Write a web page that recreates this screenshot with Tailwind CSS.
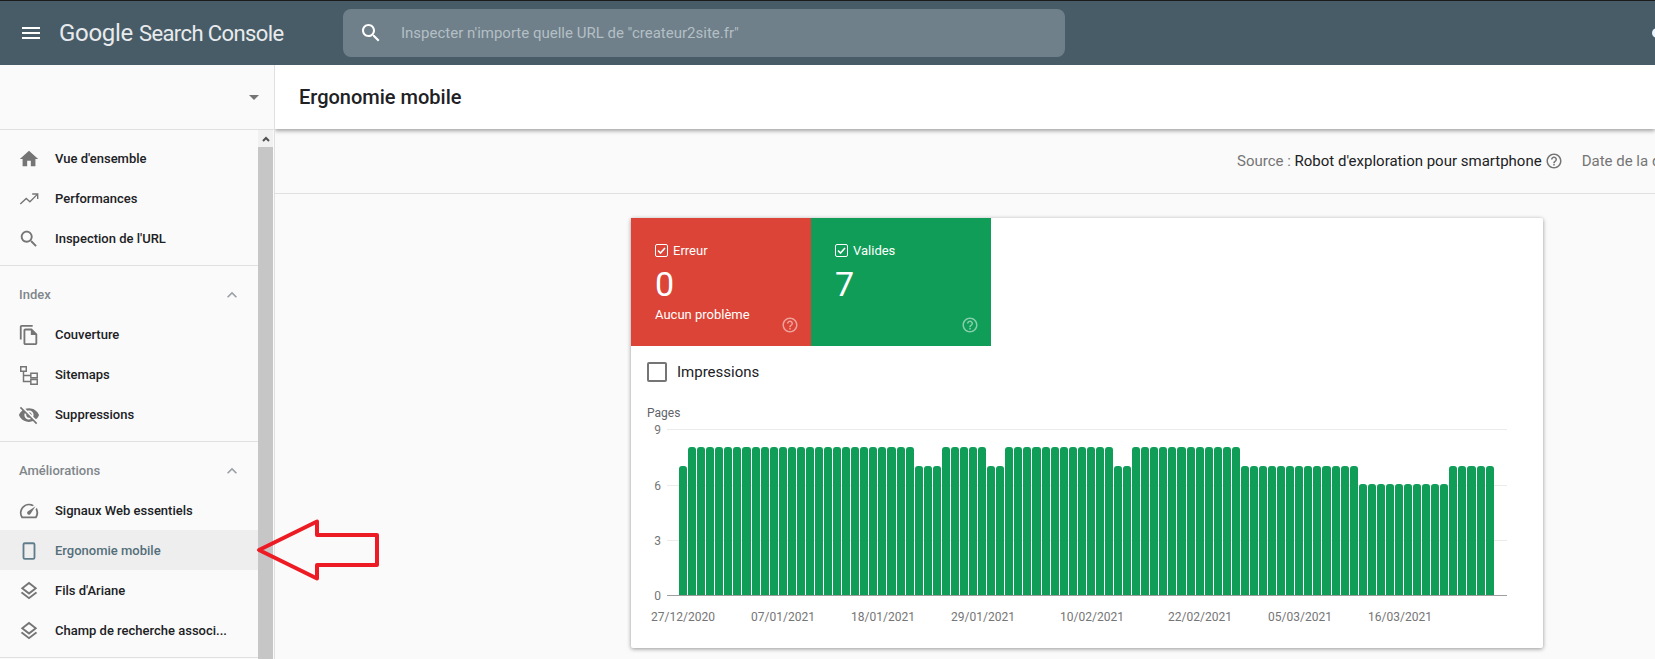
<!DOCTYPE html>
<html lang="fr">
<head>
  <meta charset="UTF-8">
  <title>Ergonomie mobile</title>
  <script src="https://cdn.jsdelivr.net/npm/@tailwindcss/browser@4"></script>
</head>
<body class="font-['Roboto',sans-serif] bg-[#fafafa] text-[#202124]">
<div class="relative w-[1655px] h-[659px] overflow-hidden flex flex-col">

  <!-- top bar -->
  <header class="h-[65px] shrink-0 border-t border-t-[#1c1c1c] bg-[#485c68] flex items-center overflow-hidden">
    <svg class="ml-[19px] w-[24px] h-[24px] fill-white" viewBox="0 0 24 24"><path d="M3 18h18v-2H3v2zm0-5h18v-2H3v2zm0-7v2h18V6H3z"/></svg>
    <div class="ml-[16px] w-[284px] flex items-baseline gap-[6px] leading-none text-[#e8ebed] whitespace-nowrap">
      <span class="text-[24px] tracking-[-0.3px]">Google</span>
      <span class="text-[22px] tracking-[-0.6px]">Search Console</span>
    </div>
    <div class="w-[722px] h-[48px] rounded-lg bg-[#6f808a] flex items-center">
      <svg class="ml-[16px] w-[24px] h-[24px] fill-white" viewBox="0 0 24 24"><path d="M15.5 14h-.79l-.28-.27C15.41 12.59 16 11.11 16 9.5 16 5.91 13.09 3 9.5 3S3 5.91 3 9.5 5.91 16 9.5 16c1.61 0 3.09-.59 4.23-1.57l.27.28v.79l5 4.99L20.49 19l-4.99-5zm-6 0C7.01 14 5 11.99 5 9.5S7.01 5 9.5 5 14 7.01 14 9.5 11.99 14 9.5 14z"/></svg>
      <span class="ml-[18px] text-[15px] text-[#b4bfc5] whitespace-nowrap">Inspecter n'importe quelle URL de "createur2site.fr"</span>
    </div>
    <span class="ml-auto mr-[-7px] w-[10px] h-[10px] rounded-full bg-[#eaf5ff]"></span>
  </header>

  <div class="flex flex-1 min-h-0">

    <!-- sidebar -->
    <aside class="w-[275px] shrink-0 border-r border-r-[#e0e0e0] flex flex-col">
      <div class="h-[65px] shrink-0 border-b border-b-[#e0e0e0] flex items-center justify-end pr-[8px]">
        <svg class="w-[24px] h-[24px] fill-[#757575]" viewBox="0 0 24 24"><path d="M7 10l5 5 5-5z"/></svg>
      </div>
      <div class="flex flex-1 min-h-0">
        <nav class="w-[258px] text-[13px] font-medium overflow-hidden">
          <div class="h-[136px] pt-[9px] border-b border-b-[#e0e0e0]">
            <a class="h-[40px] flex items-center pl-[18px] gap-[15px]">
              <svg class="w-[22px] h-[22px] fill-[#757575]" viewBox="0 0 24 24"><path d="M10 20v-6h4v6h5v-8h3L12 3 2 12h3v8z"/></svg>Vue d'ensemble
            </a>
            <a class="h-[40px] flex items-center pl-[18px] gap-[15px]">
              <svg class="w-[22px] h-[22px] fill-none stroke-[#757575] stroke-[1.5]" viewBox="0 0 24 24"><path d="M2.500 17.500l6.500-6 4 3.500 7.500-7.500M15.500 6.500h6v5.500"/></svg>Performances
            </a>
            <a class="h-[40px] flex items-center pl-[18px] gap-[15px]">
              <svg class="w-[22px] h-[22px] fill-[#757575]" viewBox="0 0 24 24"><path d="M15.5 14h-.79l-.28-.27C15.41 12.59 16 11.11 16 9.5 16 5.91 13.09 3 9.5 3S3 5.91 3 9.5 5.91 16 9.5 16c1.61 0 3.09-.59 4.23-1.57l.27.28v.79l5 4.99L20.49 19l-4.99-5zm-6 0C7.01 14 5 11.99 5 9.5S7.01 5 9.5 5 14 7.01 14 9.5 11.99 14 9.5 14z"/></svg>Inspection de l'URL
            </a>
          </div>
          <div class="h-[176px] border-b border-b-[#e0e0e0]">
            <div class="h-[48px] pt-[10px] flex items-center justify-between pl-[19px] pr-[16px] text-[#80868b]">
              Index
              <svg class="w-[20px] h-[20px] fill-[#9aa0a6]" viewBox="0 0 24 24"><path d="M12 8l-6 6 1.41 1.41L12 10.83l4.59 4.58L18 14z"/></svg>
            </div>
            <a class="h-[40px] pt-[2px] flex items-center pl-[18px] gap-[15px]">
              <svg class="w-[22px] h-[22px] fill-[#757575]" viewBox="0 0 24 24"><path d="M16 1H4c-1.1 0-2 .9-2 2v14h2V3h12V1zm-1 4H8c-1.1 0-1.99.9-1.99 2L6 21c0 1.1.89 2 1.99 2H19c1.1 0 2-.9 2-2V11l-6-6zM8 21V7h6v5h5v9H8z"/></svg>Couverture
            </a>
            <a class="h-[40px] pt-[2px] flex items-center pl-[18px] gap-[15px]">
              <svg class="w-[22px] h-[22px] fill-none stroke-[#757575] stroke-[1.6]" viewBox="0 0 24 24"><path d="M3 3h6v5H3zM14 10h7v5h-7zM14 17h7v5h-7zM6 8v11h8M6 12.500h8"/></svg>Sitemaps
            </a>
            <a class="h-[40px] pt-[2px] flex items-center pl-[18px] gap-[15px]">
              <svg class="w-[22px] h-[22px] fill-[#757575]" viewBox="0 0 24 24"><path d="M12 7c2.76 0 5 2.24 5 5 0 .65-.13 1.26-.36 1.83l2.92 2.92c1.51-1.26 2.7-2.89 3.43-4.75-1.73-4.39-6-7.500-11-7.500-1.400 0-2.740.25-3.980.7l2.160 2.160C10.740 7.130 11.350 7 12 7zM2 4.270l2.280 2.280.46.46C3.080 8.300 1.780 10.020 1 12c1.730 4.390 6 7.500 11 7.500 1.550 0 3.030-.3 4.380-.84l.42.42L19.730 22 21 20.730 3.270 3 2 4.270zM7.530 9.800l1.550 1.550c-.05.21-.08.43-.08.65 0 1.660 1.340 3 3 3 .22 0 .44-.03.65-.08l1.550 1.550c-.67.33-1.410.53-2.200.53-2.760 0-5-2.240-5-5 0-.79.2-1.530.53-2.200zm4.310-.78l3.150 3.150.02-.16c0-1.660-1.340-3-3-3l-.17.01z"/></svg>Suppressions
            </a>
          </div>
          <div class="h-[216px] border-b border-b-[#e0e0e0]">
            <div class="h-[48px] pt-[10px] flex items-center justify-between pl-[19px] pr-[16px] text-[#80868b]">
              Améliorations
              <svg class="w-[20px] h-[20px] fill-[#9aa0a6]" viewBox="0 0 24 24"><path d="M12 8l-6 6 1.41 1.41L12 10.83l4.59 4.58L18 14z"/></svg>
            </div>
            <a class="h-[40px] pt-[2px] flex items-center pl-[18px] gap-[15px]">
              <svg class="w-[22px] h-[22px] fill-[#757575]" viewBox="0 0 24 24"><path d="M20.38 8.570l-1.230 1.850a8 8 0 0 1-.22 7.580H5.070A8 8 0 0 1 15.580 6.850l1.850-1.230A10 10 0 0 0 3.350 19a2 2 0 0 0 1.720 1h13.850a2 2 0 0 0 1.740-1 10 10 0 0 0-.27-10.440zm-9.790 6.840a2 2 0 0 0 2.830 0l5.660-8.490-8.490 5.660a2 2 0 0 0 0 2.830z"/></svg>Signaux Web essentiels
            </a>
            <a class="h-[40px] pt-[2px] flex items-center pl-[18px] gap-[15px] bg-[#eeeeee] text-[#546e7a]">
              <svg class="w-[22px] h-[22px] fill-none stroke-[#607d8b] stroke-2" viewBox="0 0 24 24"><rect x="6" y="3.500" width="12" height="17" rx="1.500"/></svg>Ergonomie mobile
            </a>
            <a class="h-[40px] pt-[2px] flex items-center pl-[18px] gap-[15px]">
              <svg class="w-[22px] h-[22px] fill-[#757575]" viewBox="0 0 24 24"><path d="M11.990 18.540l-7.370-5.730L3 14.070l9 7 9-7-1.630-1.270-7.380 5.740zM12 16l7.360-5.730L21 9l-9-7-9 7 1.630 1.270L12 16zm0-11.470L17.740 9 12 13.470 6.260 9 12 4.530z"/></svg>Fils d'Ariane
            </a>
            <a class="h-[40px] pt-[2px] flex items-center pl-[18px] gap-[15px]">
              <svg class="w-[22px] h-[22px] fill-[#757575]" viewBox="0 0 24 24"><path d="M11.990 18.540l-7.370-5.730L3 14.070l9 7 9-7-1.630-1.270-7.380 5.740zM12 16l7.360-5.730L21 9l-9-7-9 7 1.630 1.270L12 16zm0-11.470L17.740 9 12 13.470 6.260 9 12 4.530z"/></svg>Champ de recherche associ...
            </a>
          </div>
        </nav>
        <!-- scrollbar -->
        <div class="w-[15px] flex flex-col">
          <div class="h-[17px] bg-[#f1f1f1] flex items-center justify-center">
            <svg class="w-[8px] h-[6px] fill-none stroke-[#505050] stroke-2" viewBox="0 0 8 6"><path d="M1 5l3-3 3 3"/></svg>
          </div>
          <div class="flex-1 bg-[#c6c6c6]"></div>
        </div>
      </div>
    </aside>

    <!-- main -->
    <main class="flex-1 min-w-0 flex flex-col overflow-hidden">
      <div class="relative z-10 h-[64px] shrink-0 bg-white shadow-[0_2px_4px_rgba(0,0,0,0.35)] flex items-center pl-[24px] text-[20px] font-medium">
        Ergonomie mobile
      </div>
      <div class="h-[65px] shrink-0 border-b border-b-[#e0e0e0] flex items-center pl-[962px] text-[15px] whitespace-nowrap text-[#757575]">
        <span>Source :&nbsp;</span><span class="text-[#202124]">Robot d'exploration pour smartphone</span>
        <svg class="ml-[3px] w-[18px] h-[18px] shrink-0 fill-[#757575]" viewBox="0 0 24 24"><path d="M11 18h2v-2h-2v2zm1-16C6.480 2 2 6.480 2 12s4.480 10 10 10 10-4.480 10-10S17.520 2 12 2zm0 18c-4.410 0-8-3.590-8-8s3.590-8 8-8 8 3.590 8 8-3.590 8-8 8zm0-14c-2.210 0-4 1.790-4 4h2c0-1.100.9-2 2-2s2 .9 2 2c0 2-3 1.750-3 5h2c0-2.250 3-2.500 3-5 0-2.210-1.790-4-4-4z"/></svg>
        <span class="ml-[19px]">Date de la dernière mise à jour</span>
      </div>

      <!-- card -->
      <section class="ml-[356px] mt-[24px] w-[912px] h-[430px] shrink-0 bg-white rounded-[2px] shadow-[0_1px_4px_rgba(0,0,0,0.4)]">
        <div class="flex h-[128px] text-white">
          <div class="relative w-[180px] bg-[#db4437] pl-[24px] pt-[25px]">
            <div class="flex items-center gap-[5px] text-[13px] leading-[15px]">
              <svg class="w-[13px] h-[13px] fill-none stroke-white" viewBox="0 0 13 13"><rect x="0.500" y="0.500" width="12" height="12" rx="1.500"/><path d="M3 6.500l2.500 2.500L10 4" stroke-width="1.600"/></svg>Erreur
            </div>
            <div class="mt-[6px] text-[34px] leading-[40px]">0</div>
            <div class="mt-[3px] text-[13px] leading-[15px]">Aucun problème</div>
            <svg class="absolute right-[12px] bottom-[12px] w-[18px] h-[18px] fill-white/50" viewBox="0 0 24 24"><path d="M11 18h2v-2h-2v2zm1-16C6.480 2 2 6.480 2 12s4.480 10 10 10 10-4.480 10-10S17.520 2 12 2zm0 18c-4.410 0-8-3.590-8-8s3.590-8 8-8 8 3.590 8 8-3.590 8-8 8zm0-14c-2.210 0-4 1.790-4 4h2c0-1.100.9-2 2-2s2 .9 2 2c0 2-3 1.750-3 5h2c0-2.250 3-2.500 3-5 0-2.210-1.790-4-4-4z"/></svg>
          </div>
          <div class="relative w-[180px] bg-[#0f9d58] pl-[24px] pt-[25px]">
            <div class="flex items-center gap-[5px] text-[13px] leading-[15px]">
              <svg class="w-[13px] h-[13px] fill-none stroke-white" viewBox="0 0 13 13"><rect x="0.500" y="0.500" width="12" height="12" rx="1.500"/><path d="M3 6.500l2.500 2.500L10 4" stroke-width="1.600"/></svg>Valides
            </div>
            <div class="mt-[6px] text-[34px] leading-[40px]">7</div>
            <svg class="absolute right-[12px] bottom-[12px] w-[18px] h-[18px] fill-white/50" viewBox="0 0 24 24"><path d="M11 18h2v-2h-2v2zm1-16C6.480 2 2 6.480 2 12s4.480 10 10 10 10-4.480 10-10S17.520 2 12 2zm0 18c-4.410 0-8-3.590-8-8s3.590-8 8-8 8 3.590 8 8-3.590 8-8 8zm0-14c-2.210 0-4 1.790-4 4h2c0-1.100.9-2 2-2s2 .9 2 2c0 2-3 1.750-3 5h2c0-2.250 3-2.500 3-5 0-2.210-1.790-4-4-4z"/></svg>
          </div>
        </div>

        <div class="mt-[16px] ml-[16px] flex items-center gap-[10px] text-[15px] leading-[20px]">
          <span class="w-[20px] h-[20px] rounded-[2px] border-2 border-[#757575]"></span>Impressions
        </div>

        <div class="mt-[23px] ml-[16px] text-[12px] leading-[16px] text-[#5f6368]">Pages</div>

        <!-- chart -->
        <div class="relative mt-[8px] ml-[36px] w-[840px] h-[167px]">
          <div class="absolute inset-x-0 top-0 h-[1px] bg-[#ebebeb]"></div>
          <div class="absolute inset-x-0 top-[56px] h-[1px] bg-[#ebebeb]"></div>
          <div class="absolute inset-x-0 top-[111px] h-[1px] bg-[#ebebeb]"></div>
          <div class="absolute inset-x-0 top-[166px] h-[1px] bg-[#9e9e9e]"></div>
          <span class="absolute right-full mr-[6px] top-[-7px] text-[12px] leading-[16px] text-[#757575]">9</span>
          <span class="absolute right-full mr-[6px] top-[49px] text-[12px] leading-[16px] text-[#757575]">6</span>
          <span class="absolute right-full mr-[6px] top-[104px] text-[12px] leading-[16px] text-[#757575]">3</span>
          <span class="absolute right-full mr-[6px] top-[159px] text-[12px] leading-[16px] text-[#757575]">0</span>
          <div id="bars" class="absolute left-[12px] bottom-[1px] w-[815px] h-[166px] flex items-end gap-[1px]"></div>
        </div>
        <div class="mt-[13px] flex text-[12px] leading-[16px] text-[#757575] text-center whitespace-nowrap">
          <span class="ml-[2px] w-[100px]">27/12/2020</span>
          <span class="w-[100px]">07/01/2021</span>
          <span class="w-[100px]">18/01/2021</span>
          <span class="w-[100px]">29/01/2021</span>
          <span class="ml-[9px] w-[100px]">10/02/2021</span>
          <span class="ml-[8px] w-[100px]">22/02/2021</span>
          <span class="w-[100px]">05/03/2021</span>
          <span class="w-[100px]">16/03/2021</span>
        </div>
      </section>
    </main>
  </div>

  <!-- red annotation arrow -->
  <svg class="absolute left-[250px] top-[512px] w-[136px] h-[76px] fill-none stroke-[#ed1c24] stroke-[4]" viewBox="0 0 136 76"><path stroke-linejoin="round" d="M9 38L67 9.500V23h60v30H67v13.500z"/></svg>
</div>

<script>
  // [value, number of days] runs of the chart
  const runs = [[7,1],[8,25],[7,3],[8,5],[7,2],[8,12],[7,2],[8,12],[7,13],[6,10],[7,5]];
  const bars = document.getElementById('bars');
  bars.innerHTML = runs.map(([v, n]) =>
    `<div class="flex-1 rounded-t-[3px] bg-[#0f9d58]" style="height:${v * 18.44}px"></div>`.repeat(n)
  ).join('');
</script>
</body>
</html>
